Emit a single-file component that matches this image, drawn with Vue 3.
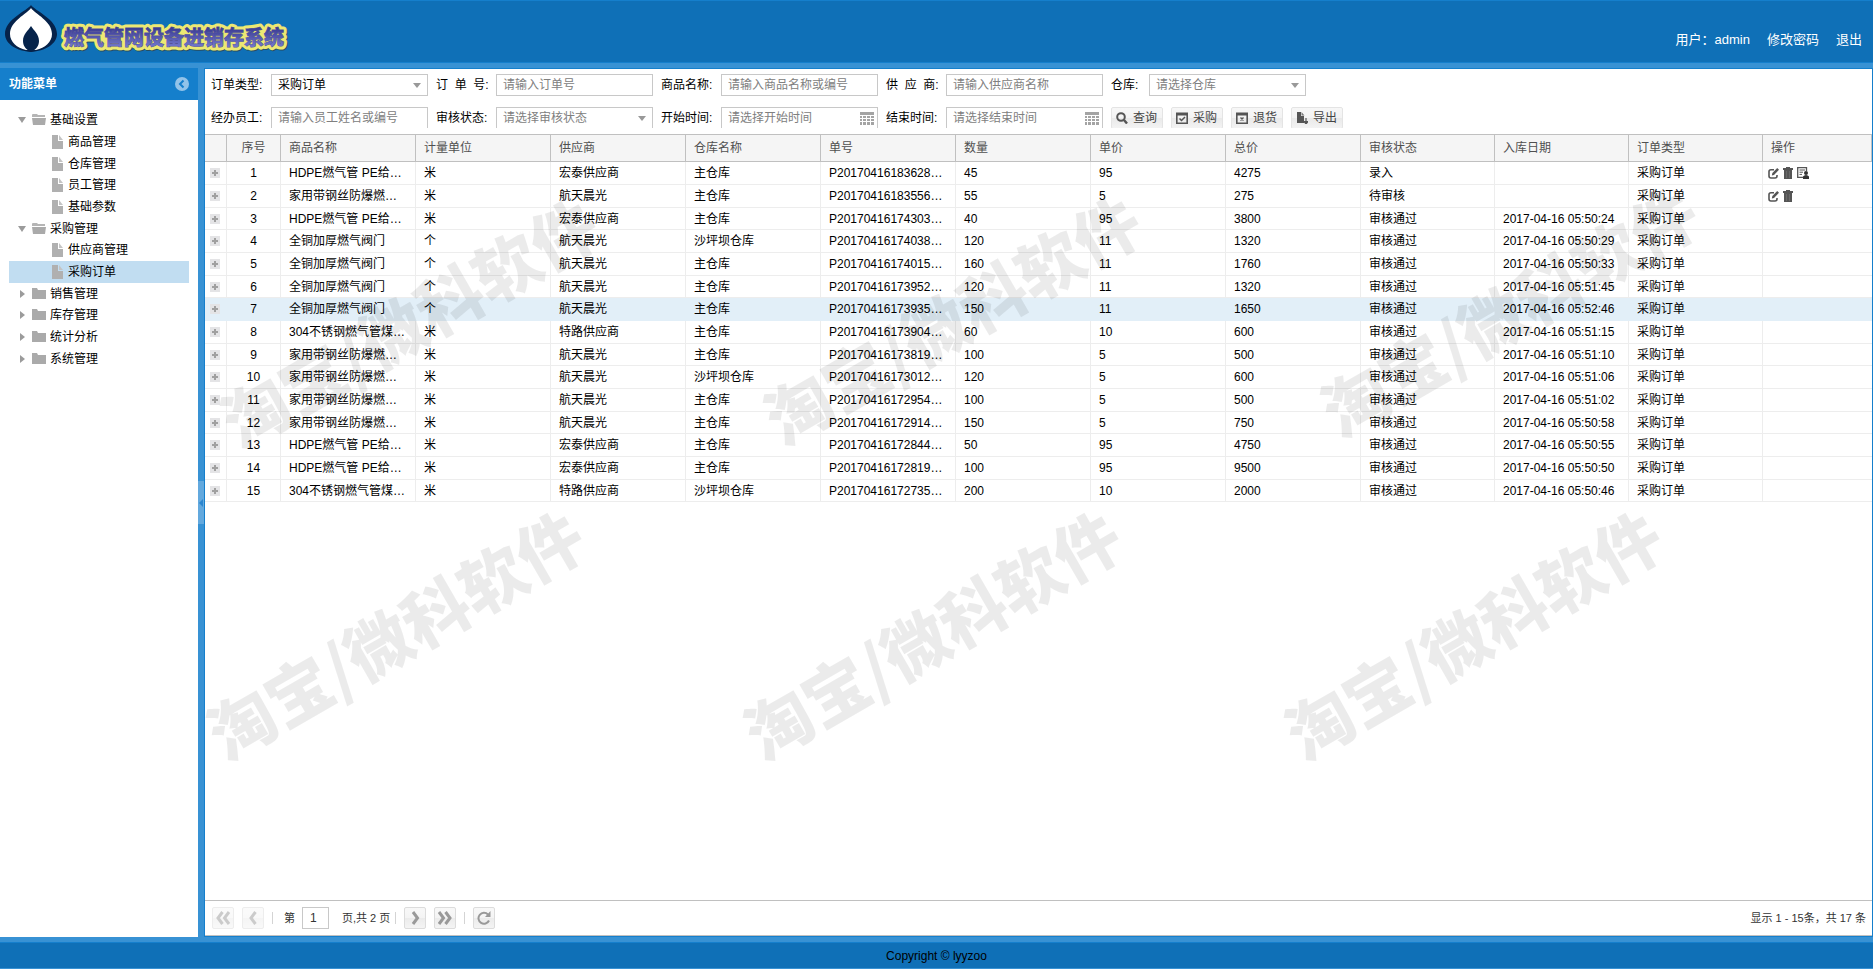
<script setup>
import { ref } from 'vue'

const menu = [
  { t: '基础设置', kind: 'open' },
  { t: '商品管理', kind: 'leaf' },
  { t: '仓库管理', kind: 'leaf' },
  { t: '员工管理', kind: 'leaf' },
  { t: '基础参数', kind: 'leaf' },
  { t: '采购管理', kind: 'open' },
  { t: '供应商管理', kind: 'leaf' },
  { t: '采购订单', kind: 'leaf', active: true },
  { t: '销售管理', kind: 'closed' },
  { t: '库存管理', kind: 'closed' },
  { t: '统计分析', kind: 'closed' },
  { t: '系统管理', kind: 'closed' },
]

const filters1 = [
  { id: 'type', label: '订单类型:', kind: 'select', text: '采购订单', filled: true },
  { id: 'no', label: '订\u00a0\u00a0单\u00a0\u00a0号:', kind: 'text', text: '请输入订单号' },
  { id: 'goods', label: '商品名称:', kind: 'text', text: '请输入商品名称或编号' },
  { id: 'supplier', label: '供\u00a0\u00a0应\u00a0\u00a0商:', kind: 'text', text: '请输入供应商名称' },
  { id: 'store', label: '仓库:', kind: 'select', text: '请选择仓库', short: true },
]
const filters2 = [
  { id: 'staff', label: '经办员工:', kind: 'text', text: '请输入员工姓名或编号' },
  { id: 'state', label: '审核状态:', kind: 'select', text: '请选择审核状态' },
  { id: 'start', label: '开始时间:', kind: 'date', text: '请选择开始时间' },
  { id: 'end', label: '结束时间:', kind: 'date', text: '请选择结束时间' },
]
const actions = [
  { t: '查询', icon: 'search' },
  { t: '采购', icon: 'check' },
  { t: '退货', icon: 'cross' },
  { t: '导出', icon: 'export' },
]

const heads = ['商品名称', '计量单位', '供应商', '仓库名称', '单号', '数量', '单价', '总价', '审核状态', '入库日期', '订单类型', '操作']
const A = 'HDPE燃气管 PE给…'
const B = '家用带钢丝防爆燃…'
const C = '全铜加厚燃气阀门'
const D = '304不锈钢燃气管煤…'
const H = '宏泰供应商', K = '航天晨光', T = '特路供应商'
const M = '主仓库', S = '沙坪坝仓库'
const P = '审核通过'
const data = [
  [A, '米', H, M, '183628', 45, 95, 4275, '录入', ''],
  [B, '米', K, M, '183556', 55, 5, 275, '待审核', ''],
  [A, '米', H, M, '174303', 40, 95, 3800, P, '50:24'],
  [C, '个', K, S, '174038', 120, 11, 1320, P, '50:29'],
  [C, '个', K, M, '174015', 160, 11, 1760, P, '50:33'],
  [C, '个', K, M, '173952', 120, 11, 1320, P, '51:45'],
  [C, '个', K, M, '173935', 150, 11, 1650, P, '52:46'],
  [D, '米', T, M, '173904', 60, 10, 600, P, '51:15'],
  [B, '米', K, M, '173819', 100, 5, 500, P, '51:10'],
  [B, '米', K, S, '173012', 120, 5, 600, P, '51:06'],
  [B, '米', K, M, '172954', 100, 5, 500, P, '51:02'],
  [B, '米', K, M, '172914', 150, 5, 750, P, '50:58'],
  [A, '米', H, M, '172844', 50, 95, 4750, P, '50:55'],
  [A, '米', H, M, '172819', 100, 95, 9500, P, '50:50'],
  [D, '米', T, S, '172735', 200, 10, 2000, P, '50:46'],
]
const rows = data.map((r) => [
  ...r.slice(0, 4),
  `P20170416${r[4]}…`,
  ...r.slice(5, 9),
  r[9] ? `2017-04-16 05:${r[9]}` : '',
  '采购订单',
])
const page = ref('1')
</script>

<template>
  <div class="shell">
    <header class="top">
      <svg class="logo" width="60" height="54" viewBox="0 0 60 54" aria-hidden="true">
        <path d="M31 4C35 10 57 18 57 33C57 43 45 50 31 51C17 50 5 43 5 33C5 18 27 10 31 4Z" fill="#06234a" />
        <path d="M31 7C35 13 52 20 52 33C52 41 45 47 36 49H26C17 47 10 41 10 33C10 20 27 13 31 7Z" fill="#fff" />
        <path d="M31 25C34 30 39 33 39 40C39 46 35 49 31 51C27 49 23 46 23 40C23 33 28 30 31 25Z" fill="#06234a" />
      </svg>
      <h1 class="brand">
        <svg width="230" height="34" viewBox="0 0 230 34" role="img" aria-label="燃气管网设备进销存系统">
          <defs>
            <linearGradient id="ink" x1="0" y1="0" x2="0" y2="1">
              <stop offset="0.2" stop-color="#3a3a92" />
              <stop offset="0.9" stop-color="#747bd0" />
            </linearGradient>
          </defs>
          <text class="glow shade" x="5" y="25">燃气管网设备进销存系统</text>
          <text class="glow" x="4" y="24">燃气管网设备进销存系统</text>
          <text class="ink" x="4" y="24">燃气管网设备进销存系统</text>
        </svg>
      </h1>
      <nav class="user">
        <span>用户：admin</span>
        <a href="#">修改密码</a>
        <a href="#">退出</a>
      </nav>
    </header>

    <div class="body">
      <aside class="side">
        <div class="side-head">
          <h2>功能菜单</h2>
          <button type="button" class="plain" aria-label="收起">
            <svg width="14" height="14" viewBox="0 0 14 14"><circle cx="7" cy="7" r="7" fill="#92c3e9" /><path d="M8.5 3.5L5 7L8.5 10.5" fill="none" stroke="#157fcc" stroke-width="2" /></svg>
          </button>
        </div>
        <ul class="tree">
          <li v-for="m in menu" :key="m.t" :class="[m.kind, { active: m.active }]">
            <svg v-if="m.kind === 'open'" class="arrow" width="10" height="10"><path d="M1 2H9L5 8Z" fill="#9b9b9b" /></svg>
            <svg v-if="m.kind === 'closed'" class="arrow" width="10" height="10"><path d="M3 1V9L8 5Z" fill="#9b9b9b" /></svg>
            <svg v-if="m.kind === 'leaf'" class="doc" width="12" height="14"><path d="M0 0H6V6H11V14H0Z" fill="#b0b0b0" /><path d="M7 0L11 5H7Z" fill="#c4c4c4" /></svg>
            <svg v-else-if="m.kind === 'open'" width="14" height="12"><path d="M0 3V1Q0 0 1 0H5L6 1H13V3Z" fill="#b5b5b5" /><path d="M0 4H14L13 11H1Z" fill="#aaa" /></svg>
            <svg v-else width="14" height="12"><path d="M0 11V0H5L6 2H14V11Z" fill="#aaa" /></svg>
            <a href="#">{{ m.t }}</a>
          </li>
        </ul>
      </aside>
      <div class="splitter">
        <button type="button" class="mini" aria-label="折叠"><svg width="4" height="8"><path d="M4 0V8L0 4Z" fill="#2b86cf" /></svg></button>
      </div>

      <main class="main">
        <form class="filters" @submit.prevent>
          <div v-for="(list, n) in [filters1, filters2]" :key="n" class="frow" :class="{ second: n === 1 }">
            <div v-for="f in list" :key="f.id" class="field" :class="{ short: f.short }">
              <label :for="f.id">{{ f.label }}</label>
              <div class="box">
                <select v-if="f.kind === 'select'" :id="f.id" :class="{ filled: f.filled }"><option>{{ f.text }}</option></select>
                <input v-else :id="f.id" type="text" :placeholder="f.text" />
                <svg v-if="f.kind === 'select'" class="caret" width="8" height="5"><path d="M0 0H8L4 5Z" fill="#999" /></svg>
                <svg v-if="f.kind === 'date'" class="cal" width="14" height="13"><path d="M0 0H14V3H0ZM0 4H2V6H0ZM3 4H6V6H3ZM7 4H10V6H7ZM11 4H14V6H11ZM0 7H2V9H0ZM3 7H6V9H3ZM7 7H10V9H7ZM11 7H14V9H11ZM0 10H2V13H0ZM3 10H6V13H3ZM7 10H10V13H7ZM11 10H14V13H11Z" fill="#a4a4a4" /></svg>
              </div>
            </div>
            <template v-if="n === 1">
              <button v-for="a in actions" :key="a.t" type="button" class="act">
                <svg width="12" height="12" viewBox="0 0 12 12" fill="none" stroke="#555" stroke-width="2">
                  <template v-if="a.icon === 'search'"><circle cx="5" cy="5" r="3.8" /><path d="M8 8L11 11.5" stroke-width="2.4" /></template>
                  <template v-else-if="a.icon === 'check'"><path d="M0 2H12" stroke-width="3" /><path d="M.8 1V11.2H11.2V1" stroke-width="1.6" /><path d="M3.5 6.5L5.5 8.5L9 5" stroke-width="1.5" /></template>
                  <template v-else-if="a.icon === 'cross'"><path d="M0 2H12" stroke-width="3" /><path d="M.8 1V11.2H11.2V1" stroke-width="1.6" /><path d="M4.5 5.5L7.5 8.5M7.5 5.5L4.5 8.5" stroke-width="1.4" /></template>
                  <template v-else><path d="M1 0H5V4H8V11H1Z" fill="#555" stroke="none" /><path d="M5.5 0L8.5 3.5H5.5Z" fill="#777" stroke="none" /><path d="M10 6V10M8 9.5L10 12L12 9.5Z" stroke-width="1.2" fill="#555" /></template>
                </svg>
                {{ a.t }}
              </button>
            </template>
          </div>
        </form>

        <div class="grid">
          <table>
            <colgroup>
              <col class="c-exp" /><col class="c-no" />
              <col v-for="i in 8" :key="'a' + i" class="c-a" />
              <col v-for="i in 3" :key="'b' + i" class="c-b" />
              <col class="c-op" />
            </colgroup>
            <thead>
              <tr><th></th><th class="mid">序号</th><th v-for="h in heads" :key="h">{{ h }}</th></tr>
            </thead>
            <tbody>
              <tr v-for="(r, i) in rows" :key="i" :class="{ hot: i === 6 }">
                <td class="exp">
                  <button type="button" class="plain" aria-label="展开"><svg width="10" height="10"><rect width="10" height="10" fill="#e4e4e6" /><path d="M5 2V8M2 5H8" stroke="#a0a0a0" stroke-width="2" /></svg></button>
                </td>
                <td class="mid">{{ i + 1 }}</td>
                <td v-for="(c, j) in r" :key="j">{{ c }}</td>
                <td class="ops">
                  <div v-if="i < 2">
                    <button type="button" class="plain" aria-label="编辑"><svg width="11" height="11" viewBox="0 0 11 11"><path d="M6 1.8H3Q1 1.8 1 3.5V8Q1 10 3 10H7Q9 10 9 8V7" fill="none" stroke="#555" stroke-width="1.6" /><path d="M9.2 0L11 1.8L6 7L3.8 7.6L4.4 5Z" fill="#555" /></svg></button>
                    <button type="button" class="plain" aria-label="删除"><svg width="10" height="12" viewBox="0 0 10 12"><path d="M3 0H7V1H10V3H0V1H3ZM1 3H9V12H1Z" fill="#555" /><path d="M3.5 4V11M6.5 4V11" stroke="#777" stroke-width=".6" /></svg></button>
                    <button v-if="i === 0" type="button" class="plain" aria-label="提交"><svg width="12" height="12" viewBox="0 0 12 12"><path d="M9.5 4V.7H.7V10.3H6" fill="none" stroke="#555" stroke-width="1.3" /><path d="M2.5 3H8M2.5 5.2H6M2.5 7.4H5" stroke="#555" /><circle cx="9" cy="6" r="2" fill="#333" /><path d="M6 12V9.5Q7 8 9 8T12 9.5V12Z" fill="#333" /></svg></button>
                  </div>
                </td>
              </tr>
            </tbody>
          </table>
        </div>

        <div class="pager">
          <button type="button" class="pg" disabled aria-label="首页"><svg width="16" height="14"><path d="M7.5 1L3 7L7.5 13M14 1L9.5 7L14 13" /></svg></button>
          <button type="button" class="pg" disabled aria-label="上一页"><svg width="16" height="14"><path d="M10.5 1L6 7L10.5 13" /></svg></button>
          <i class="sep"></i>
          <label for="pageno">第</label>
          <input id="pageno" v-model="page" type="text" />
          <span class="total">页,共 2 页</span>
          <i class="sep"></i>
          <button type="button" class="pg" aria-label="下一页"><svg width="16" height="14"><path d="M6 1L10.5 7L6 13" /></svg></button>
          <button type="button" class="pg" aria-label="末页"><svg width="16" height="14"><path d="M2 1L6.5 7L2 13M8.5 1L13 7L8.5 13" /></svg></button>
          <i class="sep"></i>
          <button type="button" class="pg" aria-label="刷新"><svg class="thin" width="16" height="14"><path d="M13 9.5A5.5 5.5 0 1 1 12 3.5" /><path class="solid" d="M14.5 0V6H9Z" /></svg></button>
          <span class="count">显示 1 - 15条，共 17 条</span>
        </div>

        <div class="marks" aria-hidden="true">
          <span v-for="n in 6" :key="n" class="mark" :class="'m' + n">淘宝/微科软件</span>
        </div>
      </main>
    </div>
    <footer class="foot">Copyright © lyyzoo</footer>
  </div>
</template>

<style>
html, body { margin: 0; }
</style>

<style scoped>
* { box-sizing: border-box; }
.shell {
  display: flex;
  flex-direction: column;
  height: 100vh;
  overflow: hidden;
  background: #3892d4;
  color: #000;
  font: 12px/16px "Liberation Sans", "Noto Sans CJK SC", sans-serif;
}
button, input, select { font: inherit; color: inherit; margin: 0; }
a { color: inherit; text-decoration: none; }
svg { display: block; flex: none; }
.plain { border: 0; padding: 0; background: none; display: block; }

.top {
  flex: none;
  display: flex;
  height: 63px;
  border-top: 1px solid #157fcc;
  border-bottom: 1px solid #157fcc;
  background: #0f70b7;
}
.brand { margin: 20px 0 0; }
.brand text { font: bold 20px "Noto Sans CJK SC", sans-serif; }
.glow { fill: #ece873; stroke: #ece873; stroke-width: 7px; stroke-linejoin: round; }
.shade { fill: #274e63; stroke: #274e63; }
.ink { fill: url(#ink); stroke: #55559a; stroke-width: 1px; paint-order: stroke; }
.user { margin-left: auto; padding: 29px 11px 0 0; display: flex; gap: 17px; color: #fff; font-size: 13px; line-height: 20px; }

.body { flex: 1; min-height: 0; display: flex; padding: 5px 0; }
.side { flex: none; width: 198px; background: #fff; }
.side-head { display: flex; align-items: center; justify-content: space-between; height: 32px; padding: 0 9px; background: #157fcc; color: #fff; }
.side-head h2 { margin: 0; font-size: 12px; font-weight: bold; }
.tree { list-style: none; margin: 9px 9px 0; padding: 0; }
.tree li { display: flex; align-items: center; height: 22px; padding-left: 8px; }
.tree li:nth-child(3n) { height: 21px; }
.tree .arrow { margin-right: 5px; }
.tree li a { margin-left: 4px; }
.tree .leaf { padding-left: 43px; }
.tree .active { background: #c1ddf1; }
.splitter { flex: none; width: 6px; display: flex; align-items: center; }
.mini { display: flex; align-items: center; width: 6px; height: 43px; padding: 0 1px; border: 0; background: #63a9de; }

.main { flex: 1; min-width: 0; position: relative; display: flex; flex-direction: column; background: #fff; border: 1px solid #157fcc; }
.filters { flex: none; padding: 5px 6px 6px; display: flex; flex-direction: column; gap: 11px; }
.frow { display: flex; gap: 8px; height: 22px; }
.second { height: 21px; overflow: hidden; }
.field { display: flex; width: 217px; }
.field label { flex: none; width: 60px; line-height: 22px; }
.field.short { width: 195px; }
.field.short label { width: 38px; }
.box { position: relative; flex: 1; height: 22px; }
.box input, .box select {
  display: block; width: 100%; height: 22px; padding: 0 6px; border: 1px solid #c8c8c8; border-radius: 0;
  background: #fff; color: #808080; appearance: none; outline: 0;
}
.box select.filled { color: #000; }
.box input::placeholder { color: #808080; opacity: 1; }
.caret { position: absolute; right: 7px; top: 9px; pointer-events: none; }
.cal { position: absolute; right: 4px; top: 5px; }
.act {
  display: flex; align-items: center; gap: 5px; width: 52px; height: 22px; padding: 0 0 0 4px;
  border: 1px solid #e4e4e4; border-radius: 2px; background: linear-gradient(#f7f7f7, #f3f3f3 50%, #e9e9e9 50%, #f3f3f3); color: #444; line-height: 20px; white-space: nowrap;
}

.grid { flex: 1; min-height: 0; overflow: hidden; }
table { width: 100%; table-layout: fixed; border-collapse: separate; border-spacing: 0; }
.c-exp { width: 22px; }
.c-no { width: 54px; }
.c-a { width: 135px; }
.c-b { width: 134px; }
.c-op { width: 109px; }
th { height: 28px; padding: 0 8px; border: solid #c0c0c0; border-width: 1px 1px 1px 0; background: #f5f5f5; color: #505050; font-weight: normal; text-align: left; }
td { height: 23px; padding: 0 8px; border: solid #ededed; border-width: 0 1px 1px 0; line-height: 16px; white-space: nowrap; overflow: hidden; }
tr:nth-child(3n) td { height: 22px; }
td:last-child { border-right: 0; }
.mid { text-align: center; }
td.exp { padding: 0 5px; }
td.ops { padding: 0 5px; }
.ops div { display: flex; align-items: center; gap: 4px; }
.hot td { background: #e2eff8; border-color: #e2eff8; }

.pager { flex: none; height: 36px; display: flex; align-items: center; padding: 0 6px 0 7px; border: solid #c0c0c0; border-width: 1px 0; color: #333; font-size: 11px; }
.pg { flex: none; display: flex; align-items: center; justify-content: center; width: 22px; height: 22px; padding: 0; margin-right: 8px; border: 1px solid #dcdcdc; border-radius: 2px; background: linear-gradient(#f8f8f8, #f4f4f4 50%, #ebebeb 50%, #f4f4f4); }
.pg path { fill: none; stroke: #999; stroke-width: 3px; }
.pg .thin path { stroke-width: 2px; }
.pg .thin .solid { fill: #999; stroke: none; }
.pg:disabled { opacity: .5; }
.sep { flex: none; width: 1px; height: 12px; background: #d4d4d4; margin-right: 8px; }
.pager label { margin: 0 7px 0 3px; }
.pager input { width: 27px; height: 22px; padding: 0 7px; border: 1px solid #c8c8c8; font-size: 12px; outline: 0; }
.total { margin: 0 5px 0 13px; }
.count { margin-left: auto; }

.marks { position: absolute; inset: 0; pointer-events: none; }
.mark { position: absolute; display: flex; align-items: center; justify-content: center; width: 440px; height: 90px; color: rgba(0, 0, 0, .08); font: 900 66px/90px "Noto Sans CJK SC", sans-serif; white-space: nowrap; transform: rotate(-30deg); }
.m1 { left: -17px; top: 206px; }
.m2 { left: 526px; top: 203px; }
.m3 { left: 1083px; top: 195px; }
.m4 { left: -31px; top: 518px; }
.m5 { left: 506px; top: 518px; }
.m6 { left: 1047px; top: 518px; }

.foot { flex: none; height: 27px; border-top: 1px solid #157fcc; border-bottom: 1px solid #3892d4; background: #0f70b7; text-align: center; line-height: 27px; }
</style>
